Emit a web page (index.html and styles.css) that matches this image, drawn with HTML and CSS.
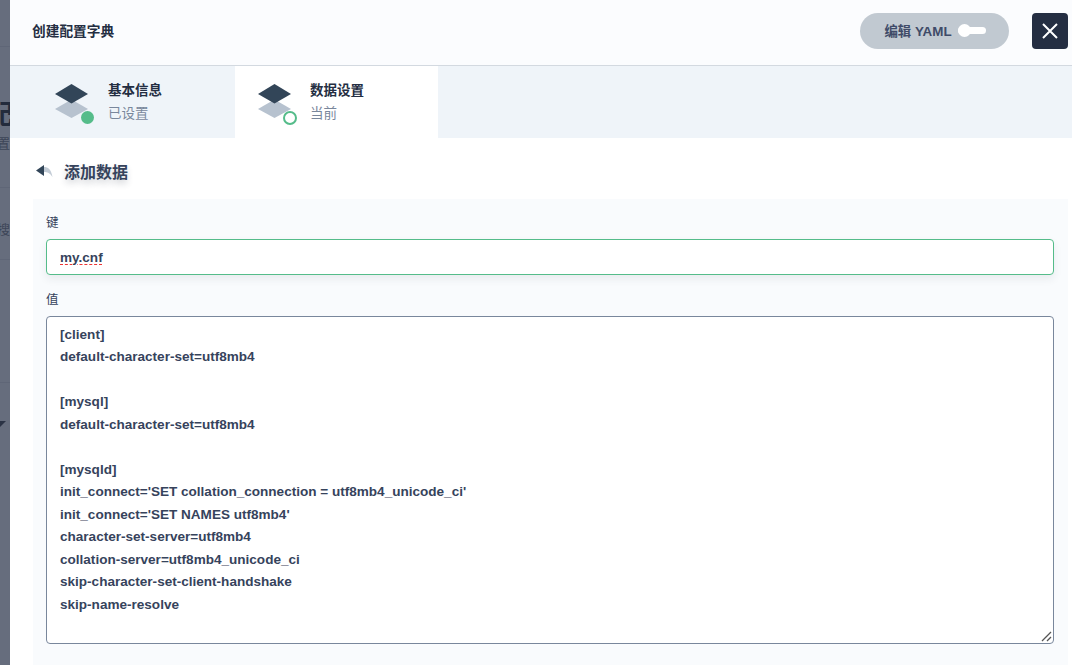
FILE: index.html
```html
<!DOCTYPE html>
<html lang="zh">
<head>
<meta charset="utf-8">
<title>创建配置字典</title>
<link rel="stylesheet" href="styles.css">
</head>
<body>
<div class="backdrop">
  <span class="bg-big">配</span>
  <span class="bg-small bg-a">置</span>
  <span class="bg-small bg-b">搜</span>
  <span class="bg-caret"></span>
  <span class="bg-line l1"></span><span class="bg-line l2"></span><span class="bg-line l3"></span><span class="bg-line l4"></span>
</div>
<main class="modal">
  <header class="head">
    <h1 class="title">创建配置字典</h1>
    <div class="head-actions">
      <div class="yaml"><span class="yaml-text">编辑 YAML</span><span class="switch"><i></i></span></div>
      <button class="close" aria-label="关闭"><svg width="16" height="16" viewBox="0 0 16 16"><path d="M1 1L15 15M15 1L1 15" stroke="#fff" stroke-width="2" fill="none"/></svg></button>
    </div>
  </header>
  <nav class="tabs">
    <div class="tab done">
      <span class="stack">
        <svg width="36" height="36" viewBox="0 0 36 36"><path d="M17.500 15.500L34 25 17.500 34 1 25Z" fill="#b7c2cf"/><path d="M17.500 0L34 10 17.500 19.500 1 10Z" fill="#324558"/></svg>
        <i class="dot"></i>
      </span>
      <span class="tab-text"><b>基本信息</b><small>已设置</small></span>
    </div>
    <div class="tab current">
      <span class="stack">
        <svg width="36" height="36" viewBox="0 0 36 36"><path d="M17.500 15.500L34 25 17.500 34 1 25Z" fill="#b7c2cf"/><path d="M17.500 0L34 10 17.500 19.500 1 10Z" fill="#324558"/></svg>
        <i class="dot ring"></i>
      </span>
      <span class="tab-text"><b>数据设置</b><small>当前</small></span>
    </div>
  </nav>
  <section class="content">
    <div class="back">
      <svg width="17" height="14" viewBox="0 0 17 14"><path d="M8 3C12 3 15 5 16.500 13 14 9 11.500 8 8 8Z" fill="#c3ccd6"/><path d="M8 1V12L0 6.500Z" fill="#324558"/></svg>
      <h2>添加数据</h2>
    </div>
    <form class="panel">
      <label class="label">键</label>
      <div class="key"><span class="squiggle">my.cnf</span></div>
      <label class="label val-label">值</label>
      <div class="value"><pre>[client]
default-character-set=utf8mb4

[mysql]
default-character-set=utf8mb4

[mysqld]
init_connect='SET collation_connection = utf8mb4_unicode_ci'
init_connect='SET NAMES utf8mb4'
character-set-server=utf8mb4
collation-server=utf8mb4_unicode_ci
skip-character-set-client-handshake
skip-name-resolve</pre>
      <svg class="grip" width="11" height="11" viewBox="0 0 11 11"><path d="M1 10L10 1M6 10L10 6" stroke="#555" stroke-width="1.300" fill="none"/></svg></div>
    </form>
  </section>
</main>
</body>
</html>
```
FILE: styles.css
```css
* { box-sizing: border-box; }
html, body { margin: 0; height: 100%; overflow: hidden; }
body {
  width: 1072px; height: 665px; position: relative;
  display: flex; background: #fff;
  font-family: "Liberation Sans", "Noto Sans CJK SC", sans-serif;
  color: #242e42;
}
.backdrop { width: 10px; flex: none; background: #666d7d; position: relative; overflow: hidden; }
.bg-big { position: absolute; left: -14px; top: 98px; font-size: 27px; line-height: 34px; font-weight: 700; color: #232b3c; }
.bg-small { position: absolute; left: -3px; font-size: 13px; line-height: 16px; color: #3d4558; }
.bg-a { top: 136px; }
.bg-b { top: 222px; }
.bg-caret { position: absolute; left: -6px; top: 421px; border-left: 6px solid transparent; border-right: 6px solid transparent; border-top: 6px solid #2b3345; }
.bg-line { position: absolute; left: 0; width: 10px; height: 1px; background: #5f6677; }
.l1 { top: 46px; } .l2 { top: 187px; } .l3 { top: 259px; } .l4 { top: 382px; }
.modal { flex: 1; min-width: 0; display: flex; flex-direction: column; background: #fff; }
.head {
  height: 66px; flex: none; background: #fbfcfe; border-bottom: 1px solid #d3d9e0;
  display: flex; align-items: center; justify-content: space-between;
  padding: 0 4px 4px 22px;
}
.title { margin: 0 0 2px; font-size: 13.700px; font-weight: 700; color: #242e42; }
.head-actions { display: flex; align-items: center; gap: 23px; }
.yaml {
  width: 149px; height: 36px; border-radius: 18px; background: #c1c9d1;
  display: flex; align-items: center; justify-content: center; gap: 6px; padding-left: 1px;
  font-size: 13.400px; font-weight: 700; color: #3f4b68;
}
.yaml-text { padding-bottom: 2px; }
.switch { width: 28px; height: 7px; border-radius: 4px; background: #fff; position: relative; display: block; }
.switch i { position: absolute; left: 0; top: -3px; width: 13px; height: 13px; border-radius: 50%; background: #fff; }
.close {
  width: 36px; height: 36px; border: 0; padding: 0; border-radius: 4px; background: #242e42;
  display: flex; align-items: center; justify-content: center;
}
.tabs { height: 72px; flex: none; display: flex; background: #eff4f9; }
.tab { display: flex; align-items: flex-start; gap: 18px; padding: 18px 0 0 44px; width: 225px; }
.tab.current { background: #fff; width: 203px; padding-left: 22px; gap: 17px; }
.stack { position: relative; width: 36px; height: 36px; display: block; flex: none; }
.stack svg { display: block; }
.dot { position: absolute; right: -4px; bottom: -4px; width: 13px; height: 13px; border-radius: 50%; background: #55bc8a; }
.dot.ring { width: 14px; height: 14px; background: #fff; border: 2px solid #55bc8a; right: -4px; bottom: -5px; }
.tab-text { display: flex; flex-direction: column; margin-top: -2px; }
.tab-text b { font-size: 13.500px; line-height: 18px; font-weight: 700; color: #242e42; }
.tab-text small { font-size: 13.500px; line-height: 18px; margin-top: 5px; color: #79879c; }
.content { flex: 1; min-height: 0; padding: 0 4px 0 23px; }
.back { height: 61px; display: flex; align-items: center; gap: 11px; padding: 4px 0 0 3px; }
.back h2 { margin: 0; font-size: 16px; font-weight: 700; color: #36435c; text-shadow: 0 4px 6px rgba(36,46,66,.2); }
.panel { background: #f9fbfd; padding: 16px 14px 21px 13px; }
.label { display: block; font-size: 12.500px; line-height: 17px; color: #36435c; }
.key {
  margin-top: 7px; height: 36px; border: 1px solid #55bc8a; border-radius: 4px; background: #fff;
  box-shadow: 0 4px 8px rgba(36,46,66,.08);
  padding: 0 13px; display: flex; align-items: center;
  font-size: 13.550px; font-weight: 700; color: #36435c;
}
.squiggle { text-decoration: underline dashed #e33; text-decoration-thickness: 1px; text-underline-offset: 2px; }
.val-label { margin-top: 17px; }
.value {
  position: relative; margin-top: 7px; height: 328px; border: 1px solid #79879c; border-radius: 4px; background: #fff;
  padding: 6.750px 13px;
}
.value pre { margin: 0; font: 700 13.550px/22.500px "Liberation Sans", sans-serif; color: #36435c; }
.grip { position: absolute; right: 1px; bottom: 1px; }
```
